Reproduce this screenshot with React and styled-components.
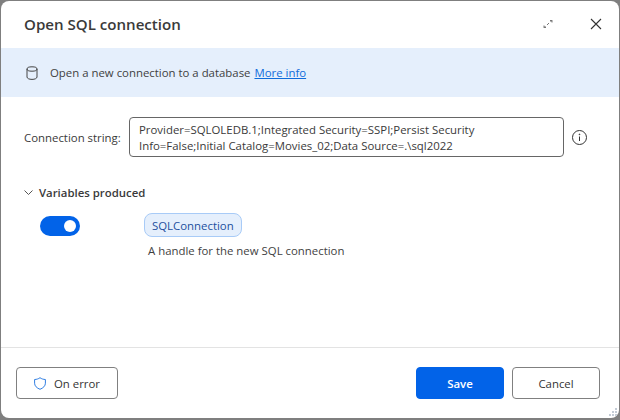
import React from "react";
import styled, { createGlobalStyle } from "styled-components";

const Global = createGlobalStyle`
  html, body { margin: 0; padding: 0; background: #fff; }
  body { font-family: "Open Sans", "Noto Sans", sans-serif; }
`;
const Backdrop = styled.div`
  width: 620px; height: 420px; background: #7f7f7f; box-sizing: border-box;
  padding: 1px 1px 2px 1px; overflow: hidden;
`;
const Dialog = styled.div`
  height: 100%; background: #fff; border-radius: 8px; display: flex; flex-direction: column; overflow: hidden; color: #323130; position: relative;
`;
const Header = styled.header`
  height: 47px; flex: none; display: flex; align-items: center; padding: 0 11px 1px 23px; box-sizing: border-box;
`;
const Title = styled.h1`
  margin: 0; font-size: 15.1px; font-weight: 600; color: #3a3a3a; flex: 1;
`;
const IconBtn = styled.button`
  width: 24px; height: 24px; border: 0; background: none; padding: 0; display: flex; align-items: center; justify-content: center; margin-left: ${p => p.$gap || 0}px;
`;
const Banner = styled.div`
  height: 49px; flex: none; background: #e5effc; display: flex; align-items: center; padding: 0 0 0 25px; gap: 12px; font-size: 11.4px; color: #3f3f3f;
`;
const MoreInfo = styled.a`
  color: #0f6cdb; text-decoration: underline; margin-left: 4px;
`;
const Body = styled.main`
  flex: 1; padding: 20px 32px 0 23px;
`;
const FieldRow = styled.div`
  display: flex; align-items: center; gap: 8px;
`;
const Label = styled.label`
  width: 97px; flex: none; font-size: 11.4px; color: #3a3a3a; white-space: nowrap;
`;
const StringBox = styled.div`
  flex: 1; height: 40px; box-sizing: border-box; border: 1px solid #666; border-radius: 4px; padding: 4px 9px; font-size: 11.4px; line-height: 16px; color: #3a3a3a;
`;
const Section = styled.div`
  display: flex; align-items: center; gap: 6px; margin-top: 28px; font-size: 11.4px; font-weight: 600; color: #3a3a3a;
`;
const VariableRow = styled.div`
  display: flex; margin: 13px 0 0 16px;
`;
const Toggle = styled.div`
  width: 40px; height: 20px; margin-top: 3px; border-radius: 10px; background: #0263e8; display: flex; align-items: center; justify-content: flex-end; padding-right: 4px; box-sizing: border-box; flex: none;
`;
const Knob = styled.span`
  width: 12px; height: 12px; border-radius: 50%; background: #fff;
`;
const VariableInfo = styled.div`
  margin-left: 64px; display: flex; flex-direction: column; align-items: flex-start;
`;
const Pill = styled.span`
  height: 24px; box-sizing: border-box; border: 1px solid #a8cbf7; border-radius: 8px; background: #e5effc; padding: 0 7px; display: flex; align-items: center; font-size: 11.4px; color: #1d4f9e;
`;
const Description = styled.div`
  margin: 6px 0 0 4px; font-size: 11.4px; color: #3f3f3f;
`;
const Footer = styled.footer`
  height: 71px; flex: none; box-sizing: border-box; border-top: 1px solid #e3e3e3; display: flex; align-items: center; padding: 0 19px 0 15px; gap: 8px;
`;
const Button = styled.button`
  height: 32px; box-sizing: border-box; border-radius: 4px; font: inherit; font-size: 11.4px; display: flex; align-items: center; justify-content: center; padding: 0;
  width: ${p => p.$w}px;
  background: ${p => p.$primary ? "#0263e8" : "#fff"};
  color: ${p => p.$primary ? "#fff" : "#333"};
  font-weight: ${p => p.$primary ? 600 : 400};
  border: 1px solid ${p => p.$primary ? "#0263e8" : "#808080"};
  gap: 8px;
`;
const Spacer = styled.div` flex: 1; `;
const Grip = styled.svg`
  position: absolute; right: 1px; bottom: 0;
`;

export default function App() {
  return (
    <Backdrop>
      <Global />
      <Dialog>
        <Header>
          <Title>Open SQL connection</Title>
          <IconBtn aria-label="Expand">
            <svg width="12" height="12" viewBox="0 0 12 12" fill="none" stroke="#777" strokeWidth="1">
              <path d="M5 7 L7 5 M8 2.5h2v2 M2 7.5v2h2" />
              <path d="M10 2.5 L8.5 4 M2 9.5 L3.5 8" />
            </svg>
          </IconBtn>
          <IconBtn aria-label="Close" $gap={24}>
            <svg width="12" height="12" viewBox="0 0 12 12" fill="none" stroke="#333" strokeWidth="1.1">
              <path d="M1 1 L11 11 M11 1 L1 11" />
            </svg>
          </IconBtn>
        </Header>
        <Banner>
          <svg width="12" height="14" viewBox="0 0 12 14" fill="none" stroke="#444" strokeWidth="1">
            <path d="M1 3v8c0 1.4 2.2 2.4 5 2.4s5-1 5-2.4V3" />
            <ellipse cx="6" cy="3" rx="5" ry="2.2" />
          </svg>
          <span>Open a new connection to a database<MoreInfo href="#">More info</MoreInfo></span>
        </Banner>
        <Body>
          <FieldRow>
            <Label>Connection string:</Label>
            <StringBox>Provider=SQLOLEDB.1;Integrated Security=SSPI;Persist Security Info=False;Initial Catalog=Movies_02;Data Source=.\sql2022</StringBox>
            <svg width="15" height="15" viewBox="0 0 15 15" fill="none" stroke="#333">
              <circle cx="7.5" cy="7.5" r="7" />
              <path d="M7.5 6.5v4.5" />
              <circle cx="7.5" cy="4.4" r=".4" fill="#333" />
            </svg>
          </FieldRow>
          <Section>
            <svg width="9" height="5" viewBox="0 0 9 5" fill="none" stroke="#555"><path d="M.5.5l4 4 4-4" /></svg>
            Variables produced
          </Section>
          <VariableRow>
            <Toggle><Knob /></Toggle>
            <VariableInfo>
              <Pill>SQLConnection</Pill>
              <Description>A handle for the new SQL connection</Description>
            </VariableInfo>
          </VariableRow>
        </Body>
        <Footer>
          <Button $w={102}>
            <svg width="12" height="13" viewBox="0 0 12 13" fill="none" stroke="#2f7de1" strokeWidth="1">
              <path d="M6 .7 C7.6 1.9 9.3 2.4 11.4 2.5 V6.2 C11.4 9 9.2 11 6 12.3 C2.8 11 .6 9 .6 6.2 V2.5 C2.7 2.4 4.4 1.9 6 .7Z" />
            </svg>
            On error
          </Button>
          <Spacer />
          <Button $w={88} $primary>Save</Button>
          <Button $w={88}>Cancel</Button>
        </Footer>
        <Grip width="11" height="11" viewBox="0 0 11 11" fill="#c4ccd6">
          <rect x="8" y="1" width="2" height="2" />
          <rect x="5" y="4" width="2" height="2" />
          <rect x="8" y="4" width="2" height="2" />
          <rect x="2" y="7" width="2" height="2" />
          <rect x="5" y="7" width="2" height="2" />
          <rect x="8" y="7" width="2" height="2" />
        </Grip>
      </Dialog>
    </Backdrop>
  );
}
